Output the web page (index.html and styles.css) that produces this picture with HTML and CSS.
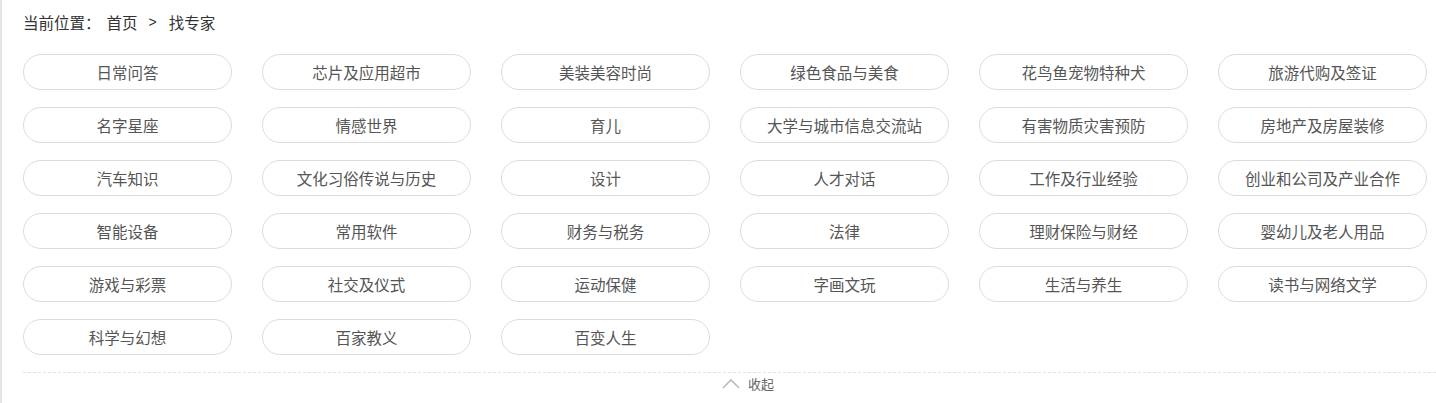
FILE: index.html
```html
<!DOCTYPE html>
<html lang="zh-CN">
<head>
<meta charset="utf-8">
<title>找专家</title>
<link rel="stylesheet" href="styles.css">
</head>
<body>
<div class="page">
  <div class="crumb">
    <span class="crumb-label">当前位置：</span>
    <a class="crumb-link" href="#">首页</a>
    <span class="crumb-sep">&gt;</span>
    <span class="crumb-cur">找专家</span>
  </div>
  <ul class="tags">
    <li class="tag">日常问答</li>
    <li class="tag">芯片及应用超市</li>
    <li class="tag">美装美容时尚</li>
    <li class="tag">绿色食品与美食</li>
    <li class="tag">花鸟鱼宠物特种犬</li>
    <li class="tag">旅游代购及签证</li>
    <li class="tag">名字星座</li>
    <li class="tag">情感世界</li>
    <li class="tag">育儿</li>
    <li class="tag">大学与城市信息交流站</li>
    <li class="tag">有害物质灾害预防</li>
    <li class="tag">房地产及房屋装修</li>
    <li class="tag">汽车知识</li>
    <li class="tag">文化习俗传说与历史</li>
    <li class="tag">设计</li>
    <li class="tag">人才对话</li>
    <li class="tag">工作及行业经验</li>
    <li class="tag">创业和公司及产业合作</li>
    <li class="tag">智能设备</li>
    <li class="tag">常用软件</li>
    <li class="tag">财务与税务</li>
    <li class="tag">法律</li>
    <li class="tag">理财保险与财经</li>
    <li class="tag">婴幼儿及老人用品</li>
    <li class="tag">游戏与彩票</li>
    <li class="tag">社交及仪式</li>
    <li class="tag">运动保健</li>
    <li class="tag">字画文玩</li>
    <li class="tag">生活与养生</li>
    <li class="tag">读书与网络文学</li>
    <li class="tag">科学与幻想</li>
    <li class="tag">百家教义</li>
    <li class="tag">百变人生</li>
  </ul>
  <div class="collapse">
    <svg class="collapse-icon" width="18" height="11" viewBox="0 0 18 11"><path d="M1 10 L9 2 L17 10" fill="none" stroke="#bbb" stroke-width="1.6"/></svg>
    <span class="collapse-text">收起</span>
  </div>
</div>
</body>
</html>
```

FILE: styles.css
```css
html, body {
  margin: 0;
  padding: 0;
  background: #fff;
}
body {
  font-family: "Noto Sans CJK SC", "Noto Sans", sans-serif;
  color: #333;
  overflow: hidden;
}
.page {
  border-left: 2px solid #e4e4e4;
  padding-left: 21px;
  width: 1500px;
  height: 403px;
  box-sizing: border-box;
}
.crumb {
  display: flex;
  align-items: center;
  height: 22px;
  padding-top: 11px;
  font-size: 15.5px;
  color: #333;
  line-height: 22px;
}
.crumb-link {
  color: #333;
  text-decoration: none;
  margin-left: 6px;
}
.crumb-sep {
  margin: 0 12px 0 11px;
  font-family: "Liberation Sans", sans-serif;
  font-size: 14px;
}
.tags {
  list-style: none;
  margin: 0;
  padding: 0;
  margin-top: 21px;
  display: grid;
  grid-template-columns: repeat(6, 209px);
  column-gap: 30px;
  row-gap: 17px;
}
.tag {
  height: 36px;
  box-sizing: border-box;
  border: 1px solid #dcdcdc;
  border-radius: 18px;
  display: flex;
  align-items: center;
  justify-content: center;
  font-size: 15.5px;
  color: #555;
}
.collapse {
  margin-top: 17px;
  border-top: 1px dashed #e2e2e2;
  width: 1413px;
  height: 21px;
  display: flex;
  justify-content: center;
  align-items: center;
  gap: 8px;
  padding-left: 37px;
  box-sizing: border-box;
}
.collapse-icon {
  display: block;
}
.collapse-text {
  font-size: 13px;
  color: #666;
}
```
